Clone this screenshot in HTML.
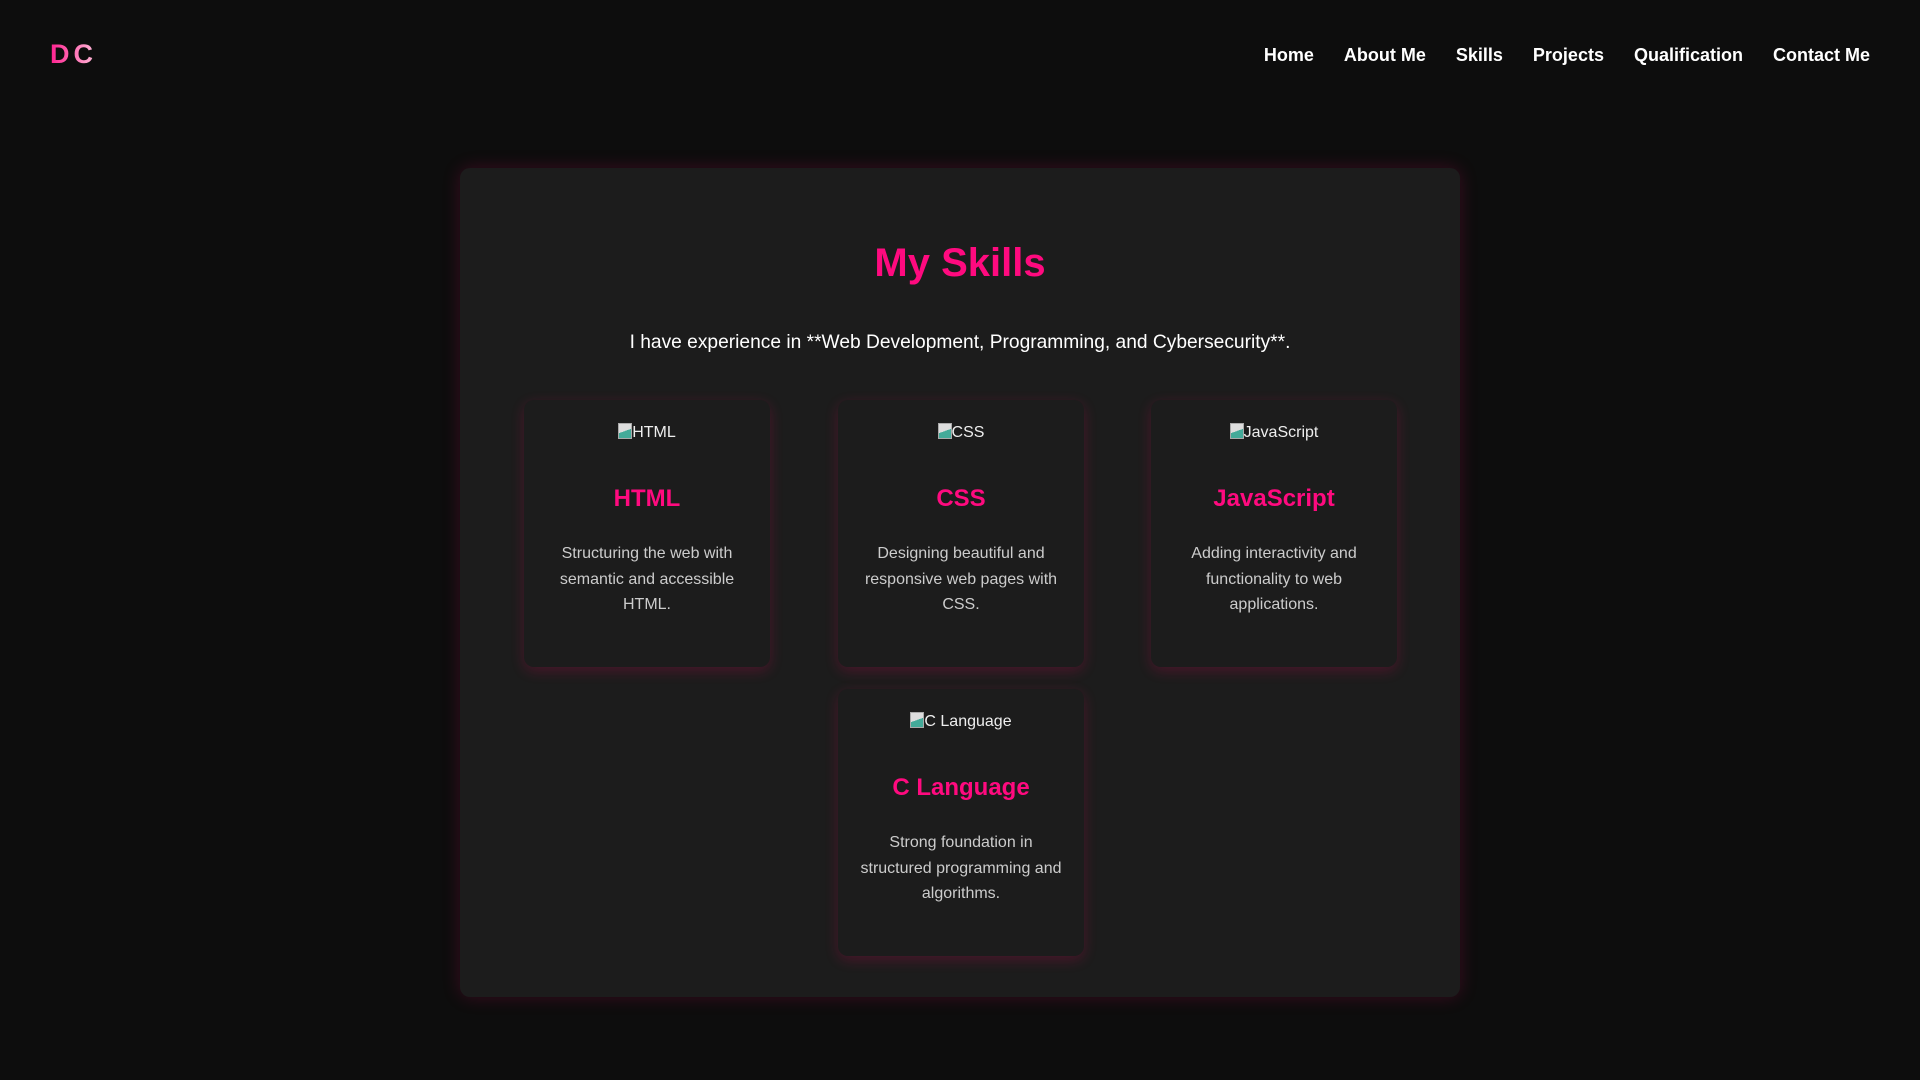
<!DOCTYPE html>
<html><head><meta charset="utf-8"><style>
*{box-sizing:border-box;margin:0;padding:0}
body{width:1920px;height:1080px;background:#0d0d0d;font-family:"Liberation Sans",sans-serif;color:#fff;overflow:hidden;position:relative}
.logo{position:absolute;left:50px;top:39px;font-size:27px;font-weight:bold;letter-spacing:4px;background:linear-gradient(90deg,#ff1f8e,#ffc0dc);-webkit-background-clip:text;color:transparent}
nav{position:absolute;right:50px;top:45px;display:flex;gap:30px;font-size:18px;font-weight:bold}
.box{position:absolute;left:460px;top:168px;width:1000px;height:829px;background:#1c1c1c;border-radius:10px;box-shadow:0 0 18px rgba(255,0,110,.18);text-align:center}
h1{position:absolute;top:241px;left:0;right:0;text-align:center;color:#ff0a7f;font-size:40px}
.p{position:absolute;top:332px;left:0;right:0;text-align:center;font-size:19.2px}
.card{position:absolute;width:246px;height:267px;background:#1c1c1c;border-radius:10px;box-shadow:0 4px 14px rgba(255,0,100,.2);text-align:center}
.img{position:absolute;top:23px;left:0;right:0;font-size:16px;color:#eee}
.img span{display:inline-block;width:14px;height:16px;border:1px solid #aaa;background:linear-gradient(160deg,#ddd 50%,#4a9 50%);vertical-align:-2px}
.card h3{position:absolute;top:85px;left:0;right:0;color:#ff0a7f;font-size:24px}
.card p{position:absolute;top:141px;left:20px;right:20px;font-size:16px;line-height:25.5px;color:#ccc}
</style></head><body>
<div class="logo">DC</div>
<nav><span>Home</span><span>About Me</span><span>Skills</span><span>Projects</span><span>Qualification</span><span>Contact Me</span></nav>
<div class="box"></div>
<h1>My Skills</h1>
<div class="p">I have experience in **Web Development, Programming, and Cybersecurity**.</div>
<div class="card" style="left:524px;top:400px"><div class="img"><span></span>HTML</div><h3>HTML</h3><p>Structuring the web with semantic and accessible HTML.</p></div>
<div class="card" style="left:838px;top:400px"><div class="img"><span></span>CSS</div><h3>CSS</h3><p>Designing beautiful and responsive web pages with CSS.</p></div>
<div class="card" style="left:1151px;top:400px"><div class="img"><span></span>JavaScript</div><h3>JavaScript</h3><p>Adding interactivity and functionality to web applications.</p></div>
<div class="card" style="left:838px;top:689px"><div class="img"><span></span>C Language</div><h3>C Language</h3><p>Strong foundation in structured programming and algorithms.</p></div>
</body></html>
